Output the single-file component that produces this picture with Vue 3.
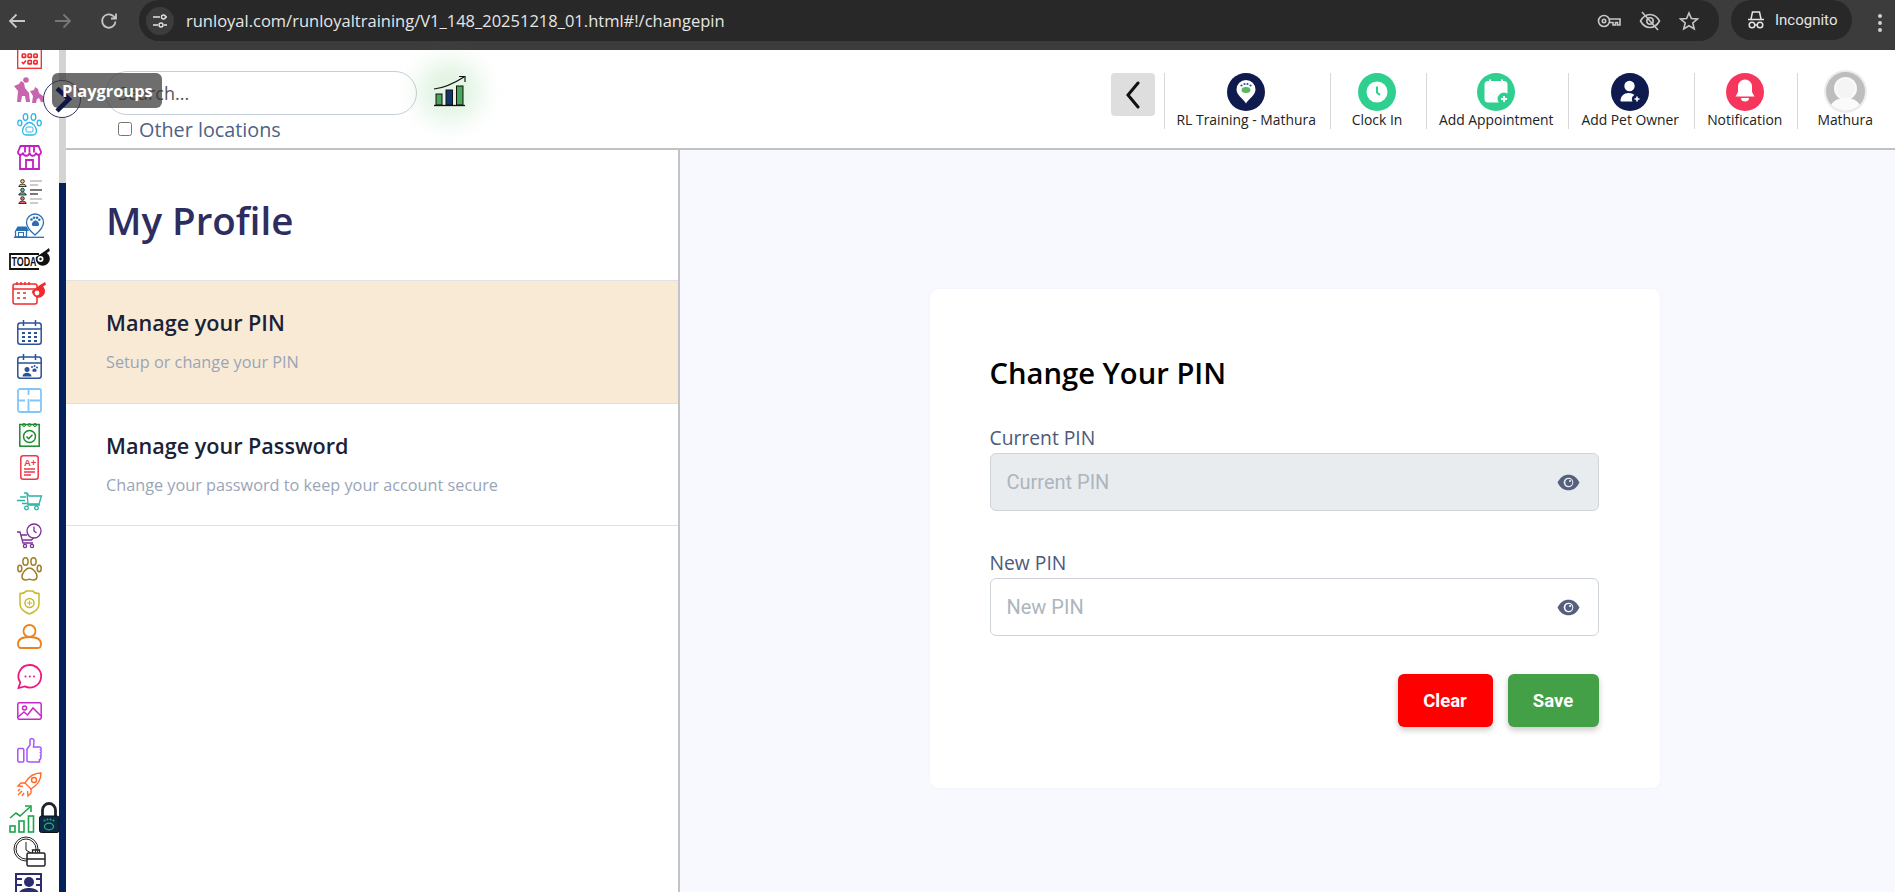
<script setup>
const raw = [
  { x: 17, y: 46, w: 25, h: 23, body: '<g fill="none" stroke="#ee2b2b" stroke-width="1.3"><rect x=".7" y=".7" width="23.6" height="21.6"/><rect x="5.2" y="8" width="3.4" height="3.4" rx=".7" stroke-width="1.6"/><rect x="11" y="8" width="3.4" height="3.4" rx=".7" stroke-width="1.6"/><rect x="16.8" y="8" width="3.4" height="3.4" rx=".7" stroke-width="1.6"/><path d="M4.8 16l1.6 1.6 2.6-3" stroke-width="1.5"/><rect x="11" y="14.5" width="3.4" height="3.4" rx=".7" stroke-width="1.6"/><rect x="16.8" y="14.5" width="3.4" height="3.4" rx=".7" stroke-width="1.6"/></g>' },
  { x: 14, y: 76, w: 32, h: 28, body: '<g fill="#c766ad"><circle cx="12" cy="4" r="2.800"/><path d="M0 10L5 8l2-3 3 2 1 5 4 5 1 9h-4l-1-6H8l-1 6H3l1-11z"/><path d="M16 15l4-1 1-3 3 2 1 4 4 3 2 6h-4l-2-4-2 1-1 4h-4l1-7z"/></g>' },
  { x: 17, y: 113, w: 25, h: 23, body: '<g fill="none" stroke="#29b8ec" stroke-width="1.300"><ellipse cx="8.500" cy="4" rx="2.300" ry="3.300"/><ellipse cx="16.500" cy="4" rx="2.300" ry="3.300"/><ellipse cx="2.800" cy="10" rx="2" ry="2.800"/><ellipse cx="22.200" cy="10" rx="2" ry="2.800"/><path d="M12.500 9.500c-3.500 0-7 5-7 8.500 0 3 2.500 4 4 4h6c1.500 0 4-1 4-4 0-3.500-3.500-8.500-7-8.500z"/><rect x="9" y="14" width="7" height="5" rx="1.500" stroke-width="1"/></g>' },
  { x: 17, y: 145, w: 25, h: 25, body: '<g fill="none" stroke="#c41fc4" stroke-width="1.800"><path d="M3.500 1h18L24 7a2.500 2.500 0 0 1-5 .500 3.200 3.200 0 0 1-6.500 0 3.200 3.200 0 0 1-6.500 0A2.500 2.500 0 0 1 1 7z"/><path d="M8 1v6.500M12.500 1v6.500M17 1v6.500"/><path d="M3 10v14h19V10"/><path d="M9 24v-9h7v9"/></g>' },
  { x: 18, y: 179, w: 24, h: 25, body: '<g stroke="#222" stroke-width=".9"><circle cx="4.500" cy="2.300" r="1.800" fill="#f4c86a"/><path d="M.8 7.500c0-3 7.400-3 7.400 0z" fill="#f4c86a"/><circle cx="4.500" cy="11" r="1.800" fill="#53c79a"/><path d="M.8 16c0-3 7.400-3 7.400 0z" fill="#53c79a"/><circle cx="4.500" cy="19.500" r="1.800" fill="#f06b6b"/><path d="M.8 24.500c0-3 7.400-3 7.400 0z" fill="#f06b6b"/></g><g stroke-width="1.200"><path d="M12 2h12M12 6h8" stroke="#999"/><path d="M12 11h12" stroke="#222"/><path d="M12 15h8" stroke="#222"/><path d="M12 20h12M12 24h8" stroke="#999"/></g>' },
  { x: 14, y: 213, w: 30, h: 25, body: '<g fill="none" stroke="#2a6eb4" stroke-width="1.300"><path d="M21 1a8.500 8.500 0 0 0-8.500 8.500C12.500 15 21 22 21 22s8.500-7 8.500-12.500A8.500 8.500 0 0 0 21 1z"/><path d="M0 24.300h30" /><path d="M1.500 18v6h11v-6"/><rect x="4.500" y="19.500" width="5" height="4.500" stroke-width="1"/></g><path d="M1 18l2.500-4.500h9L15 18z" fill="#2a6eb4"/><g fill="#2a6eb4"><circle cx="17.500" cy="6.500" r="1.300"/><circle cx="20" cy="4.800" r="1.300"/><circle cx="23" cy="4.800" r="1.300"/><circle cx="25.300" cy="6.800" r="1.300"/><path d="M21.500 7.500c-2 0-4 2.500-3.500 4.500.5 1.500 2.500 1 3.500 1s3 .5 3.500-1c.5-2-1.500-4.500-3.500-4.500z"/></g>' },
  { x: 9, y: 248, w: 41, h: 22, body: '<path d="M30 6H1v15h29" fill="#fff" stroke="#111" stroke-width="1.800"/><text x="2.500" y="18" font-family="Liberation Sans" font-size="12" font-weight="700" fill="#111" textLength="25" lengthAdjust="spacingAndGlyphs">TODA</text><path d="M27 9l9-6 4-3 .8 3-3 2a7 7 0 1 1-10.800 4z" fill="#111"/><circle cx="31.500" cy="11" r="3" fill="#fff"/><circle cx="31.500" cy="11" r="1.200" fill="#111"/>' },
  { x: 12, y: 281, w: 35, h: 24, body: '<g fill="none" stroke="#ef2b2b" stroke-width="1.500"><rect x="1" y="3" width="24" height="20" rx="2"/><path d="M1 8h24"/><path d="M5 1v3M9 1v3M13 1v3M17 1v3"/><path d="M5 12h3M11 12h3M5 17h3M11 17h3"/></g><path d="M20 10l8-6 5-3 1 2.500-3 2a6.500 6.500 0 1 1-11 4.500z" fill="#ef2b2b"/><circle cx="25" cy="12" r="2.400" fill="#fff"/>' },
  { x: 17, y: 320, w: 25, h: 25, body: '<g fill="none" stroke="#2a5299" stroke-width="1.500"><rect x=".8" y="3" width="23.400" height="21.200" rx="2.500"/><path d="M.8 9h23.400M6.500 0v6M18.500 0v6"/></g><g fill="#2a5299"><rect x="5" y="12" width="3" height="2"/><rect x="11" y="12" width="3" height="2"/><rect x="17" y="12" width="3" height="2"/><rect x="5" y="16" width="3" height="2"/><rect x="11" y="16" width="3" height="2"/><rect x="17" y="16" width="3" height="2"/><rect x="5" y="20" width="3" height="2"/><rect x="11" y="20" width="3" height="2"/><rect x="17" y="20" width="3" height="2"/></g>' },
  { x: 17, y: 354, w: 25, h: 25, body: '<g fill="none" stroke="#2a5299" stroke-width="1.500"><rect x=".8" y="3" width="23.400" height="21.200" rx="2.500"/><path d="M.8 9h23.400M6.500 0v6M18.500 0v6"/></g><g fill="#2a5299"><circle cx="10" cy="15.500" r="2.500"/><path d="M5.500 22.500c0-5 9-5 9 0z"/><circle cx="15" cy="13" r="1"/><circle cx="17.500" cy="12" r="1"/><circle cx="20" cy="13.500" r="1"/><path d="M17.500 14.500c-2 0-2.800 2.500-1.500 3.200h3c1.300-.7.500-3.200-1.500-3.200z"/></g>' },
  { x: 17, y: 388, w: 25, h: 25, body: '<g fill="none" stroke="#84c5f9" stroke-width="1.800"><rect x="1" y="1" width="23" height="23" rx="2"/><path d="M11.500 1v6M11.500 11v13M1 12.500h7M13 12.500h11"/></g>' },
  { x: 19, y: 422, w: 21, h: 25, body: '<g fill="none" stroke="#1a8b2a"><rect x=".8" y="2.500" width="19.400" height="21.700" stroke-width="1.500"/><circle cx="10.500" cy="14.500" r="6" stroke-width="1.500"/><path d="M7.500 14.500l2.200 2.200 3.800-4" stroke-width="1.500"/><circle cx="5" cy="3" r="1.500" stroke-width="1"/><circle cx="10.500" cy="3" r="1.500" stroke-width="1"/><circle cx="16" cy="3" r="1.500" stroke-width="1"/></g>' },
  { x: 20, y: 455, w: 19, h: 25, body: '<g fill="none" stroke="#e83a4a" stroke-width="1.500"><rect x=".8" y=".8" width="17.400" height="23.400" rx="2.500"/><path d="M4 14h11M4 17h11M4 20h7"/></g><text x="4" y="10.500" font-family="Liberation Sans" font-size="9.500" font-weight="700" fill="#e83a4a">A+</text>' },
  { x: 17, y: 492, w: 25, h: 19, body: '<g fill="none" stroke="#2bb3a6" stroke-width="1.300"><path d="M7 1h3l2 3h12.500l-2.500 8H10.500"/><path d="M10 1l1 12h12"/><circle cx="9.500" cy="16" r="1.800"/><circle cx="19.500" cy="16" r="1.800"/><path d="M3 5h6M0 8.500h8M5 11.500h5"/></g>' },
  { x: 17, y: 523, w: 25, h: 25, body: '<g fill="none" stroke="#7c2f99" stroke-width="1.300"><circle cx="17" cy="8" r="7"/><path d="M17 3.500V8l2.500 2"/><path d="M0 9h3l3 11h10"/><path d="M4 12h6M5.500 17h9l2-2"/><circle cx="8" cy="23" r="1.600"/><circle cx="15" cy="23" r="1.600"/></g>' },
  { x: 17, y: 557, w: 25, h: 24, body: '<g fill="none" stroke="#a17b23" stroke-width="1.500"><ellipse cx="8.500" cy="4.500" rx="2.600" ry="3.800"/><ellipse cx="16.500" cy="4.500" rx="2.600" ry="3.800"/><ellipse cx="2.800" cy="11.500" rx="2" ry="3.200"/><ellipse cx="22.200" cy="11.500" rx="2" ry="3.200"/><path d="M12.500 11c-3.500 0-7.500 5-7.500 8.500 0 3 2.500 3.500 4 3.500 1.500 0 2-.8 3.500-.8s2 .8 3.500.8c1.500 0 4-.5 4-3.500 0-3.500-4-8.500-7.500-8.500z"/></g>' },
  { x: 19, y: 590, w: 21, h: 25, body: '<g fill="none" stroke="#c9b927" stroke-width="1.500"><path d="M1 3.500c3 0 5-.800 6-2.500h7c1 1.700 3 2.500 6 2.500V14c0 4.500-4 8-9.500 10C5 22 1 18.500 1 14z"/><circle cx="10.500" cy="13" r="4.500"/><path d="M10.500 10.500v5M8 13h5" stroke-width="1"/></g>' },
  { x: 17, y: 624, w: 25, h: 25, body: '<g fill="none" stroke="#e98321" stroke-width="1.800"><circle cx="12.500" cy="7" r="6"/><path d="M1 20c0-5 5-7 11.500-7S24 15 24 20c0 3-1.500 4-3 4H4c-1.500 0-3-1-3-4z"/></g>' },
  { x: 17, y: 664, w: 25, h: 25, body: '<path d="M12.800 1a11.300 11.300 0 1 1-5 21.400L1.500 24l1.800-5.500A11.300 11.300 0 0 1 12.800 1z" fill="none" stroke="#f0157f" stroke-width="1.800"/><g fill="#f0157f"><circle cx="8.500" cy="12.500" r="1"/><circle cx="12.800" cy="12.500" r="1"/><circle cx="17" cy="12.500" r="1"/></g>' },
  { x: 17, y: 702, w: 25, h: 18, body: '<g fill="none" stroke="#c827c8" stroke-width="1.500"><rect x=".8" y=".8" width="23.400" height="16.400" rx="1.500"/><circle cx="7.500" cy="6" r="2"/><path d="M1 15l6-5 3.500 3 5.500-7 8 8"/></g>' },
  { x: 17, y: 738, w: 25, h: 25, body: '<g fill="none" stroke="#a855f7" stroke-width="1.500"><rect x=".8" y="10.500" width="6" height="13.500" rx="1.200"/><path d="M10 11l3-4V2c0-2 4-2 4 1l-.5 6h6c2 0 2 2.500 1 3 1 .8 1 2.500 0 3 1 .8 1 2.500 0 3 .8 1 .5 3.500-1 3.500v2.500H13c-2 0-3-1-3-1z"/></g>' },
  { x: 17, y: 772, w: 25, h: 25, body: '<g fill="none" stroke="#ff6a2b" stroke-width="1.400"><path d="M24 1C17 1 12 4 8 11l6 6c7-4 10-9 10-16z"/><circle cx="17" cy="8" r="2.500"/><path d="M8 11H4L1 14l5 .5M14 17v4l-3 3-.5-5"/><path d="M5 19l-4 4M7 21l-2 3M3 17l-2 2"/></g>' },
  { x: 9, y: 802, w: 50, h: 32, body: '<g fill="none" stroke="#1ea24a" stroke-width="1.600"><rect x="1" y="24" width="5" height="6"/><rect x="10" y="19" width="5" height="11"/><rect x="19.500" y="14" width="5" height="16"/><path d="M1 16l6-5 4 3 10-9"/><path d="M16 4h6v6"/></g><path d="M33.500 15V8a6.500 6.500 0 0 1 13 0v7" fill="none" stroke="#1d252c" stroke-width="2.800"/><rect x="30.500" y="14" width="19.500" height="16.500" rx="2" fill="#0b2a4a" stroke="#111" stroke-width="1"/><g fill="#2eb36a"><circle cx="35.500" cy="18.500" r="1"/><circle cx="38.500" cy="17.500" r="1"/><circle cx="41.500" cy="17.500" r="1"/><circle cx="44.500" cy="18.500" r="1"/></g><ellipse cx="40" cy="24.500" rx="4.500" ry="3.300" fill="none" stroke="#2eb36a" stroke-width="1.300"/>' },
  { x: 13, y: 836, w: 32, h: 31, body: '<g fill="none" stroke="#222" stroke-width="1"><circle cx="13" cy="13" r="12"/><circle cx="13" cy="13" r="10"/></g><path d="M13 6v8l5 3" fill="none" stroke="#222" stroke-width="1"/><rect x="14" y="17" width="18" height="13" rx="1.500" fill="#fff" stroke="#222" stroke-width="1.500"/><path d="M19.500 17v-3h7v3M14 23h18" fill="none" stroke="#222" stroke-width="1.300"/>' },
  { x: 15, y: 873, w: 27, h: 22, body: '<rect x="1" y="1" width="25" height="21" fill="#fff" stroke="#2b2d6e" stroke-width="2"/><circle cx="14" cy="9" r="5" fill="#2b2d6e"/><path d="M4 21c0-8 20-8 20 0z" fill="#2b2d6e"/><path d="M2 6h5M2 12h5M21 6h5M21 12h5" stroke="#2b2d6e" stroke-width="2"/>' }
]
let cursor = 50
const icons = raw.map((i) => {
  const top = i.y - cursor
  cursor = i.y + i.h
  return { ...i, style: { marginTop: top + 'px', marginLeft: i.x + 'px' } }
})
const tools = [
  { label: 'RL Training - Mathura', width: 165.6, kind: 'pin' },
  { label: 'Clock In', width: 96, kind: 'clock' },
  { label: 'Add Appointment', width: 142.4, kind: 'appt' },
  { label: 'Add Pet Owner', width: 125.6, kind: 'pet' },
  { label: 'Notification', width: 103.4, kind: 'bell' },
  { label: 'Mathura', width: 97.6, kind: 'user' }
]
</script>

<template>
  <div class="page">
    <div class="chrome">
      <div class="nav">
        <svg width="20" height="20" viewBox="0 0 20 20" fill="none" stroke="#c7c7c7" stroke-width="1.800"><path d="M18 10H3M9.500 3.500L3 10l6.500 6.500" /></svg>
        <svg width="20" height="20" viewBox="0 0 20 20" fill="none" stroke="#777" stroke-width="1.800"><path d="M2 10h15M10.500 3.500L17 10l-6.500 6.500" /></svg>
        <svg width="20" height="20" viewBox="0 0 20 20" fill="none" stroke="#c7c7c7" stroke-width="1.800"><path d="M16.500 10.500a6.700 6.700 0 1 1-2-5.300l2.300 2.300M17 2.500v5h-5" /></svg>
      </div>
      <div class="omni">
        <span class="site">
          <svg width="16" height="16" viewBox="0 0 16 16" fill="none" stroke="#e3e3e3" stroke-width="1.400"><path d="M1 4h7M12 12h3M1 12h5" /><circle cx="11.500" cy="4" r="2" /><circle cx="9" cy="12" r="2" /><path d="M13.500 4H15" /></svg>
        </span>
        <span class="url">runloyal.com/runloyaltraining/V1_148_20251218_01.html#!/changepin</span>
        <span class="omni-icons">
          <svg width="24" height="16" viewBox="0 0 24 16" fill="none" stroke="#c7c7c7" stroke-width="1.600"><circle cx="7" cy="8" r="5.500" /><circle cx="7" cy="8" r="1.700" /><path d="M12.500 6H23v6h-2.500V9.500h-2V12H16V9.500h-3.500" /></svg>
          <svg width="22" height="20" viewBox="0 0 22 20" fill="none" stroke="#c7c7c7" stroke-width="1.600"><path d="M1.500 10C4 5.500 7 3.500 11 3.500s7 2 9.500 6.500c-2.500 4.500-5.500 6.500-9.500 6.500S4 14.500 1.500 10z" /><circle cx="11" cy="10" r="3.200" /><path d="M3 1l16 18" /></svg>
          <svg width="20" height="20" viewBox="0 0 20 20" fill="none" stroke="#c7c7c7" stroke-width="1.600"><path d="M10 2l2.400 5.500 6 .5-4.600 4 1.400 5.900L10 14.800l-5.200 3.100 1.400-5.900L1.600 8l6-.5z" /></svg>
        </span>
      </div>
      <div class="incog">
        <svg width="20" height="20" viewBox="0 0 20 20" fill="none" stroke="#e3e3e3" stroke-width="1.500"><path d="M2 9.500h16M5 9l1.500-7h7L15 9" /><circle cx="6" cy="15" r="2.800" /><circle cx="14" cy="15" r="2.800" /><path d="M8.800 15h2.400" /></svg>
        <span>Incognito</span>
      </div>
      <div class="dots"><i></i><i></i><i></i></div>
    </div>

    <div class="body">
      <aside class="rail">
        <svg
          v-for="(icon, n) in icons"
          :key="n"
          class="rail-icon"
          :style="icon.style"
          :width="icon.w"
          :height="icon.h"
          :viewBox="`0 0 ${icon.w} ${icon.h}`"
          v-html="icon.body"
        ></svg>
      </aside>
      <div class="scroll"><div class="thumb"></div></div>

      <div class="toggle"></div>
      <div class="tip"><span>Playgroups</span></div>
      <svg class="chev" width="20" height="26" viewBox="0 0 20 26" fill="none" stroke="#0d1745" stroke-width="4.500"><path d="M3 1.500l12 10.500L3 24" /></svg>

      <div class="main">
        <header class="top">
          <div class="search-wrap">
            <div class="search">Search...</div>
            <label class="other"><span class="box"></span>Other locations</label>
          </div>
          <div class="chart">
            <svg width="34" height="32" viewBox="0 0 34 32" fill="none">
              <path d="M1 14c10-1 19-5 30-12" stroke="#111" stroke-width="1.200" />
              <path d="M26 1.500h6v5.500" stroke="#111" stroke-width="1.200" />
              <rect x="3" y="19" width="6" height="11" fill="#4aa65a" stroke="#111" />
              <rect x="13" y="15" width="6.500" height="15" fill="#14346e" stroke="#111" />
              <rect x="23.500" y="11" width="6.500" height="19" fill="#4aa65a" stroke="#111" />
              <path d="M1 30.500h31" stroke="#111" stroke-width="1.300" />
            </svg>
          </div>
          <div class="spacer"></div>
          <button class="back" type="button">
            <svg width="16" height="28" viewBox="0 0 16 28" fill="none" stroke="#111" stroke-width="3" stroke-linecap="round"><path d="M13 2L3 14l10 12" /></svg>
          </button>
          <div class="tools">
            <div v-for="t in tools" :key="t.kind" class="tool" :style="{ width: t.width + 'px' }">
              <svg v-if="t.kind === 'pin'" width="38" height="38" viewBox="0 0 38 38">
                <circle cx="19" cy="19" r="19" fill="#0f1a4e" />
                <path d="M19 30.500c-2.500-4.500-9.500-8.500-9.500-14a9.500 9.500 0 0 1 19 0c0 5.500-7 9.500-9.500 14z" fill="#fff" />
                <g fill="#2456a8"><circle cx="14.500" cy="12.500" r="1.100" /><circle cx="17.500" cy="11" r="1.100" /><circle cx="20.500" cy="11" r="1.100" /><circle cx="23.500" cy="12.500" r="1.100" /></g>
                <ellipse cx="19" cy="17" rx="4.500" ry="3" fill="#5cb85c" />
              </svg>
              <svg v-else-if="t.kind === 'clock'" width="38" height="38" viewBox="0 0 38 38">
                <circle cx="19" cy="19" r="19" fill="#2ecf8f" />
                <circle cx="19" cy="19" r="10.500" fill="#fff" />
                <path d="M19 13.500v6l3 2.500" fill="none" stroke="#2ecf8f" stroke-width="2" />
              </svg>
              <svg v-else-if="t.kind === 'appt'" width="38" height="38" viewBox="0 0 38 38">
                <circle cx="19" cy="19" r="19" fill="#2ecf8f" />
                <rect x="7.500" y="8" width="23" height="21.500" rx="3.500" fill="#fff" />
                <path d="M13 6.500v3.500M25 6.500v3.500" stroke="#fff" stroke-width="2" />
                <circle cx="27" cy="26" r="6.500" fill="#2ecf8f" />
                <path d="M27 23v6M24 26h6" stroke="#fff" stroke-width="2" />
              </svg>
              <svg v-else-if="t.kind === 'pet'" width="38" height="38" viewBox="0 0 38 38">
                <circle cx="19" cy="19" r="19" fill="#0f1a4e" />
                <circle cx="18.500" cy="13" r="5.200" fill="#fff" />
                <path d="M9.500 28c0-5 3.500-8 8-8 2.500 0 4.500.8 6 2a4.500 4.500 0 0 0-2 6.500H11a1.500 1.500 0 0 1-1.500-.5z" fill="#fff" />
                <path d="M26 23.500v5M23.500 26h5" stroke="#fff" stroke-width="1.600" />
              </svg>
              <svg v-else-if="t.kind === 'bell'" width="38" height="38" viewBox="0 0 38 38">
                <circle cx="19" cy="19" r="19" fill="#f7365d" />
                <path d="M19 6.500a7 7 0 0 0-7 7v5.500l-2.500 4.500h19L26 19v-5.500a7 7 0 0 0-7-7z" fill="#fff" />
                <path d="M15 25h8a4 3.500 0 0 1-8 0z" fill="#fff" />
              </svg>
              <svg v-else class="avatar" width="43" height="43" viewBox="0 0 43 43">
                <defs><clipPath id="avatar-clip"><circle cx="21.500" cy="21.500" r="19.500" /></clipPath></defs>
                <circle cx="21.500" cy="21.500" r="21.500" fill="#ececec" />
                <g clip-path="url(#avatar-clip)">
                  <rect width="43" height="43" fill="#bdbdbd" />
                  <circle cx="21.500" cy="18.500" r="10.500" fill="#f4f4f4" stroke="#f9f9f9" stroke-width="2" />
                  <path d="M5 43c0-11 8-15 16.500-15S38 32 38 43z" fill="#fafafa" />
                </g>
              </svg>
              <span class="tool-label">{{ t.label }}</span>
            </div>
          </div>
        </header>

        <div class="content">
          <section class="menu">
            <h1 class="menu-title">My Profile</h1>
            <div class="menu-item active">
              <h2>Manage your PIN</h2>
              <p>Setup or change your PIN</p>
            </div>
            <div class="menu-item">
              <h2>Manage your Password</h2>
              <p>Change your password to keep your account secure</p>
            </div>
          </section>
          <section class="pane">
            <div class="card">
              <h2 class="card-title">Change Your PIN</h2>
              <label class="field-label">Current PIN</label>
              <div class="field disabled">
                <span class="ph">Current PIN</span>
                <svg width="23" height="17" viewBox="0 0 22 16"><path d="M.5 8C3 3 6.500.5 11 .5S19 3 21.500 8C19 13 15.500 15.500 11 15.500S3 13 .5 8z" fill="#55607f" /><circle cx="11" cy="8" r="4.600" fill="#e9ecef" /><circle cx="11.300" cy="8" r="3.300" fill="#55607f" /><circle cx="12.500" cy="6.500" r="1" fill="#e9ecef" /></svg>
              </div>
              <label class="field-label second">New PIN</label>
              <div class="field">
                <span class="ph">New PIN</span>
                <svg width="23" height="17" viewBox="0 0 22 16"><path d="M.5 8C3 3 6.500.5 11 .5S19 3 21.500 8C19 13 15.500 15.500 11 15.500S3 13 .5 8z" fill="#55607f" /><circle cx="11" cy="8" r="4.600" fill="#fff" /><circle cx="11.300" cy="8" r="3.300" fill="#55607f" /><circle cx="12.500" cy="6.500" r="1" fill="#fff" /></svg>
              </div>
              <div class="actions">
                <button class="btn clear" type="button">Clear</button>
                <button class="btn save" type="button">Save</button>
              </div>
            </div>
          </section>
        </div>
      </div>
    </div>
  </div>
</template>

<style>
html, body { margin: 0; padding: 0; overflow: hidden; background: #fff; }
</style>

<style scoped>
* { box-sizing: border-box; }
.page { width: 1895px; height: 892px; overflow: hidden; display: flex; flex-direction: column; font-family: "Open Sans", sans-serif; }
.chrome { height: 50px; background: #3c3c3c; display: flex; align-items: flex-start; flex: none; }
.nav { width: 139px; height: 41px; display: flex; align-items: center; padding-left: 7px; gap: 26px; }
.omni { width: 1580px; height: 41px; background: #282828; border-radius: 20px; display: flex; align-items: center; padding: 0 20px 0 7px; }
.site { width: 28px; height: 28px; border-radius: 50%; background: #3c3c3c; display: flex; align-items: center; justify-content: center; flex: none; }
.url { margin-left: 12px; font-family: "Open Sans", sans-serif; font-size: 16.500px; color: #e6e6e6; flex: 1; white-space: nowrap; }
.omni-icons { display: flex; align-items: center; gap: 18px; }
.incog { margin-left: 12px; width: 121px; height: 40px; background: #282828; border-radius: 20px; display: flex; align-items: center; gap: 9px; padding-left: 15px; color: #e3e3e3; font-size: 15px; font-family: "Roboto", sans-serif; }
.dots { margin-left: 26px; padding-top: 14px; display: flex; flex-direction: column; gap: 3px; }
.dots i { width: 4px; height: 4px; background: #d0d0d0; border-radius: 50%; display: block; }
.body { flex: 1; display: flex; min-height: 0; position: relative; }
.rail { width: 59px; flex: none; background: #fff; overflow: hidden; display: flex; flex-direction: column; align-items: flex-start; }
.rail-icon { flex: none; display: block; overflow: visible; }
.scroll { width: 7px; flex: none; background: #04215c; }
.thumb { height: 133px; background: #d4d4d4; }
.toggle { position: absolute; left: 43px; top: 30px; width: 38px; height: 38px; border-radius: 50%; border: 1px solid #2d3566; background: #fff; z-index: 3; }
.tip { position: absolute; left: 52px; top: 23px; width: 110px; height: 35px; color: #fff; font: 700 16.400px/35px "Open Sans", sans-serif; padding-left: 10px; white-space: nowrap; }
.tip::before { content: ""; position: absolute; inset: 0; background: rgba(54, 54, 54, .72); border-radius: 6px; z-index: 4; }
.tip span { position: relative; z-index: 6; }
.chev { position: absolute; left: 54px; top: 37px; z-index: 5; }
.main { flex: 1; min-width: 0; display: flex; flex-direction: column; }
.top { height: 100px; flex: none; border-bottom: 2px solid #c2c2c2; background: #fff; display: flex; align-items: flex-start; }
.search-wrap { margin-left: 39px; padding-top: 21px; width: 312px; }
.search { height: 44px; border: 1px solid #c5cfdc; border-radius: 22px; font-size: 18px; line-height: 42px; padding-left: 12px; color: #555; }
.other { display: flex; align-items: center; margin-top: 1px; margin-left: 13px; font-size: 19.800px; line-height: 27px; color: #4d6285; white-space: nowrap; }
.box { width: 14px; height: 14px; border: 1px solid #767676; border-radius: 2.500px; background: #fff; margin-right: 7px; margin-top: -2px; flex: none; }
.chart { margin-left: 16px; margin-top: 25px; width: 34px; height: 32px; border-radius: 50%; box-shadow: 0 0 26px 14px rgba(90, 190, 100, .2); background: rgba(90, 190, 100, .16); }
.chart svg { display: block; }
.spacer { flex: 1; }
.back { width: 44px; height: 43px; margin-top: 23px; border: 0; padding: 0; background: #dedede; border-radius: 4px; display: flex; align-items: center; justify-content: center; }
.tools { display: flex; margin-top: 23px; margin-left: 9px; }
.tool { height: 56px; border-left: 1px solid #d8d8d8; padding-right: 3px; display: flex; flex-direction: column; align-items: center; position: relative; }
.tool svg { flex: none; display: block; }
.tool .avatar { margin-top: -3px; margin-bottom: -2px; }
.tool-label { font-size: 13.900px; line-height: 18px; color: #222; white-space: nowrap; margin-top: 0; }
.content { flex: 1; display: flex; min-height: 0; }
.menu { width: 614px; flex: none; border-right: 2px solid #c4c4c4; background: #fff; }
.menu-title { margin: 0; height: 131px; padding: 0 0 0 40px; font-size: 38.500px; font-weight: 600; line-height: 140px; color: #2d2d5f; border-bottom: 1px solid #e2e2e2; }
.menu-item { height: 122.500px; padding: 27px 0 0 40px; border-bottom: 1px solid #e0e0e0; }
.menu-item.active { background: #f9ead6; }
.menu-item h2 { margin: 0; font-size: 21.600px; font-weight: 600; line-height: 30px; color: #1a2238; }
.menu-item p { margin: 13px 0 0; font-size: 16.250px; line-height: 22px; color: #9aa5b8; }
.pane { flex: 1; background: #f8f9fe; padding: 139px 0 0 249.500px; }
.card { width: 730px; height: 499px; background: #fff; border-radius: 8px; box-shadow: 0 0 2px rgba(0, 0, 0, .06); padding: 62px 61px 0 60px; }
.card-title { margin: 0; font-size: 29.200px; font-weight: 600; line-height: 44px; color: #000; }
.field-label { display: block; margin-top: 33px; font-size: 19.300px; line-height: 20px; color: #4c5a7a; }
.field-label.second { margin-top: 42px; }
.field { margin-top: 5px; height: 58px; border: 1px solid #ced4da; border-radius: 6px; display: flex; align-items: center; justify-content: space-between; padding: 0 18px 0 16px; background: #fff; }
.field.disabled { background: #e9ecef; }
.ph { font-family: "Roboto", sans-serif; font-size: 20px; color: #adb5bd; }
.actions { margin-top: 38px; display: flex; justify-content: flex-end; gap: 15px; }
.btn { height: 53px; border: 0; border-radius: 6px; color: #fff; font: 700 18.500px "Roboto", sans-serif; box-shadow: 0 3px 6px rgba(0, 0, 0, .22); }
.clear { width: 95px; background: #fe0000; }
.save { width: 91px; background: #43a047; }
</style>
